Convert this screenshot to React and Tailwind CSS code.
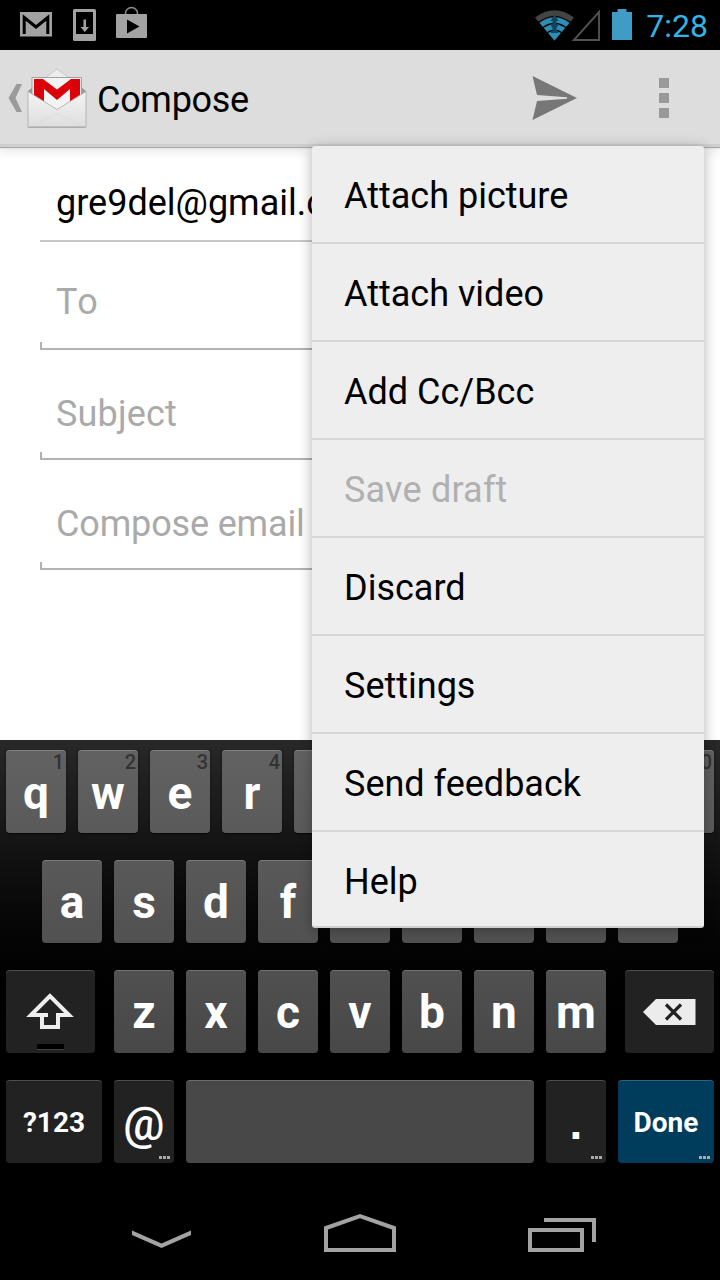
import React from 'react';
import clsx from 'clsx';

const menuItems = [
  { label: 'Attach picture' },
  { label: 'Attach video' },
  { label: 'Add Cc/Bcc' },
  { label: 'Save draft', disabled: true },
  { label: 'Discard' },
  { label: 'Settings' },
  { label: 'Send feedback' },
  { label: 'Help' }
];

const topRow = ['q', 'w', 'e', 'r', 't', 'y', 'u', 'i', 'o', 'p'];
const homeRow = ['a', 's', 'd', 'f', 'g', 'h', 'j', 'k', 'l'];
const bottomRow = ['z', 'x', 'c', 'v', 'b', 'n', 'm'];

const StatusBar = () => (
  <div className="flex h-[50px] items-center justify-between bg-black pl-5 pr-3">
    <svg width="130" height="50" viewBox="20 0 130 50">
      <rect x="20" y="12" width="32" height="24.500" fill="#a3a3a3" />
      <path d="M24.200 34V17.500L36 27L47.800 17.500V34" fill="none" stroke="#000" strokeWidth="3" />
      <rect x="73" y="9" width="23" height="32" rx="1.500" fill="#a3a3a3" />
      <rect x="76" y="12" width="17" height="22" fill="#000" />
      <path d="M83.500 19.500h2.500V27h3L84.750 32L80.500 27h3z" fill="#a3a3a3" />
      <path d="M125.500 15V13.500a6 6 0 0 1 12 0V15" fill="none" stroke="#8c8c8c" strokeWidth="1.500" />
      <rect x="116" y="14" width="31" height="24" rx="1" fill="#a3a3a3" />
      <path d="M127 19.500V33.500L139.500 26.500z" fill="#000" />
    </svg>
    <div className="flex items-center">
      <svg width="112" height="50" viewBox="530 0 112 50">
        <path d="M535 17.500Q554.500 3 574 17.500L554.500 40.500z" fill="#444" />
        <path d="M539.700 23Q554.500 12 569.300 23L554.500 40.500z" fill="#2c8eb8" />
        <path d="M539 22Q554.500 11 570 22" fill="none" stroke="#000" strokeWidth="1.200" />
        <path d="M543 27.500Q554.500 19.500 566 27.500M547.500 32.500Q554.500 28 561.500 32.500" fill="none" stroke="#000" strokeWidth="1.400" />
        <path d="M554.500 14L558.500 21H556.500V24H559L556.500 28V30L558.500 33H550.500L552.500 30V28L550 24H552.500V21H550.500z" fill="#12465c" />
        <path d="M573.800 40H599V12z" fill="none" stroke="#525252" strokeWidth="1.900" />
        <path d="M612 12h5.500V9h9v3H632v28H612z" fill="#409cc4" />
      </svg>
      <span className="w-[66px] whitespace-nowrap pt-0.5 text-right text-[32px] leading-[48px] text-[#33b5e5]">7:28</span>
    </div>
  </div>
);

const GmailLogo = () => (
  <svg width="62" height="62" viewBox="26 68 62 62" className="relative top-px ml-0.5">
    <defs>
      <linearGradient id="envelope" x1="0" y1="0" x2="0" y2="1">
        <stop offset="0%" stopColor="#f4f4f4" />
        <stop offset="100%" stopColor="#dedede" />
      </linearGradient>
    </defs>
    <path d="M28 91L33 87H81L86 91V127H28z" fill="#999" />
    <path d="M45 78L57 69L69 78z" fill="#ececec" stroke="#c4c4c4" strokeWidth=".8" />
    <path d="M32 77.500H81.500V115H32z" fill="#f3f3f3" stroke="#999" strokeWidth=".9" />
    <path d="M34 79H43L57 89.500L71 79H80V103H70V89L57 100L44 89V103H34z" fill="#dc0008" />
    <path d="M28 91.500L57 109.500L86 91.500V127H28z" fill="url(#envelope)" stroke="#aaa" strokeWidth=".8" />
    <path d="M28 127L57 114L86 127" fill="none" stroke="#dadada" strokeWidth=".8" />
    <path d="M28 127.200H86" stroke="#999" strokeWidth=".8" />
  </svg>
);

const ActionBar = () => (
  <div className="relative z-10 flex h-[97px] items-center border-b-[3px] border-[#cfcfcf] bg-[#ddd] pl-2 pt-px shadow-[0_1px_1px_#aaa,0_3px_12px_rgba(0,0,0,0.12)]">
    <svg width="16" height="30" viewBox="0 0 16 30">
      <path d="M8.500 1H14L7.500 15L14 29H8.500L.5 15z" fill="#9b9b9b" />
    </svg>
    <GmailLogo />
    <h1 className="ml-[9px] mt-1 text-[36px] leading-[42px] tracking-[-0.3px] text-black">Compose</h1>
    <div className="ml-auto flex items-center gap-[81px] pr-[49px]">
      <svg width="46" height="46" viewBox="531 75 46 46">
        <path d="M532.500 76L577 98L532.500 120L537 101L567 98.800V97.200L537 95z" fill="#777" />
      </svg>
      <svg width="11" height="42" viewBox="658 77 11 42" className="mr-0.5">
        <path d="M659 78h10v10h-10zM659 93h10v10h-10zM659 108h10v10h-10z" fill="#999" />
      </svg>
    </div>
  </div>
);

const Field = ({ label, className }) => (
  <div className={clsx('relative flex items-end border-b-2 border-[#b2b2b2] px-4 text-[36px] leading-[42px] text-[#aaa]', className)}>
    {label}
    <span className="absolute bottom-0 left-0 h-1.5 w-0.5 bg-[#b2b2b2]" />
    <span className="absolute bottom-0 right-0 h-1.5 w-0.5 bg-[#b2b2b2]" />
  </div>
);

const OverflowMenu = () => (
  <div className="absolute left-[312px] top-[146px] z-20 w-[392px] rounded-[3px] border-b-2 border-[#cfcfcf] bg-[#eee] shadow-[0_2px_14px_rgba(0,0,0,0.3)]">
    {menuItems.map((item, idx) => (
      <div
        key={item.label}
        className={clsx(
          'flex items-center px-8 text-[36px] leading-[42px]',
          idx === menuItems.length - 1 ? 'h-[94px] pt-1.5' : 'h-[98px] border-b-2 border-[#d6d6d6] pt-1',
          item.disabled ? 'tracking-[0.2px] text-[#b0b0b0]' : 'text-black'
        )}
      >
        {item.label}
      </div>
    ))}
  </div>
);

const Key = ({ children, hint, more, className }) => (
  <div className={clsx('relative flex h-[83px] items-center justify-center rounded-[4px] font-bold text-white shadow-[inset_0_1px_0_rgba(255,255,255,0.2),0_1px_2px_rgba(0,0,0,0.7)]', className)}>
    {children}
    {hint && <span className="absolute right-0.5 top-px text-[20px] font-medium leading-[22px] text-[#333]">{hint}</span>}
    {more && (
      <span className="absolute bottom-1 right-1 flex gap-px">
        <i className="size-[3px] bg-[#aaa]" />
        <i className="size-[3px] bg-[#aaa]" />
        <i className="size-[3px] bg-[#aaa]" />
      </span>
    )}
  </div>
);

const Keyboard = () => (
  <div className="flex h-[444px] flex-col gap-[27px] bg-linear-to-b from-[#282828] to-black to-75% px-1.5 pt-2.5">
    <div className="flex gap-3">
      {topRow.map((k, idx) => (
        <Key key={k} hint={String((idx + 1) % 10)} className="w-[60px] bg-linear-to-b from-[#626262] to-[#5a5a5a] pt-1 text-[46px]">{k}</Key>
      ))}
    </div>
    <div className="flex justify-center gap-3">
      {homeRow.map((k) => (
        <Key key={k} className="w-[60px] bg-linear-to-b from-[#595959] to-[#515151] pt-0.5 text-[46px]">{k}</Key>
      ))}
    </div>
    <div className="flex justify-between">
      <Key className="w-[89px] bg-[#222]">
        <svg width="89" height="83" viewBox="6 970 89 83">
          <path d="M50 996L31 1015H48H42V1027H58V1015H69z" transform="translate(0 0)" fill="none" stroke="#eee" strokeWidth="4" />
          <rect x="37" y="1044" width="27" height="5" fill="#000" />
          <path d="M37 1049.500H64" stroke="#444" />
        </svg>
      </Key>
      <div className="flex gap-3">
        {bottomRow.map((k) => (
          <Key key={k} className="w-[60px] bg-linear-to-b from-[#505050] to-[#484848] pt-0.5 text-[46px]">{k}</Key>
        ))}
      </div>
      <Key className="w-[89px] bg-[#222]">
        <svg width="89" height="83" viewBox="625 970 89 83">
          <path d="M643 1012L656 999H695.500V1025H656z" fill="#ececec" />
          <path d="M666 1004.500L681 1019.500M681 1004.500L666 1019.500" stroke="#222" strokeWidth="3.200" />
        </svg>
      </Key>
    </div>
    <div className="flex gap-3">
      <Key className="w-24 bg-[#222] pt-0.5 text-[28px]">?123</Key>
      <Key more className="w-[60px] bg-[#222] pt-1.5 text-[46px]">
        <span className="font-medium">@</span>
      </Key>
      <Key className="w-[348px] bg-[#484848]" />
      <Key more className="w-[60px] bg-[#222] pt-1 text-[46px]">
        <span className="font-['Liberation_Sans',sans-serif]">.</span>
      </Key>
      <Key more className="w-24 bg-[#003c5c] pt-0.5 text-[28px]">Done</Key>
    </div>
  </div>
);

const NavBar = () => (
  <div className="flex h-24 items-center bg-black">
    <svg width="720" height="96" viewBox="0 1184 720 96" fill="none" stroke="#a3a3a3" strokeWidth="4">
      <path d="M132 1230.500L161.500 1243.500L191 1230.500V1235L161.500 1248L132 1235z" fill="#a3a3a3" stroke="none" />
      <path d="M326 1250V1228L360 1216L394 1228V1250z" />
      <path d="M530 1230H582V1250H530zM544 1220H594V1242" />
    </svg>
  </div>
);

const App = () => (
  <div className="relative flex h-[1280px] w-[720px] flex-col overflow-hidden bg-white font-[Roboto,sans-serif]">
    <StatusBar />
    <ActionBar />
    <main className="flex h-[593px] flex-col px-10">
      <div className="h-[95px] border-b-2 border-[#c8c8c8] px-4 pt-[35px] text-[36px] leading-[42px] text-black">gre9del@gmail.com</div>
      <Field label="To" className="h-[108px] pb-[25px] tracking-[1.5px]" />
      <Field label="Subject" className="h-[110px] pb-[23px] tracking-[0.15px]" />
      <Field label="Compose email" className="h-[110px] pb-[23px] tracking-[-0.15px]" />
    </main>
    <Keyboard />
    <NavBar />
    <OverflowMenu />
  </div>
);

export default App;
